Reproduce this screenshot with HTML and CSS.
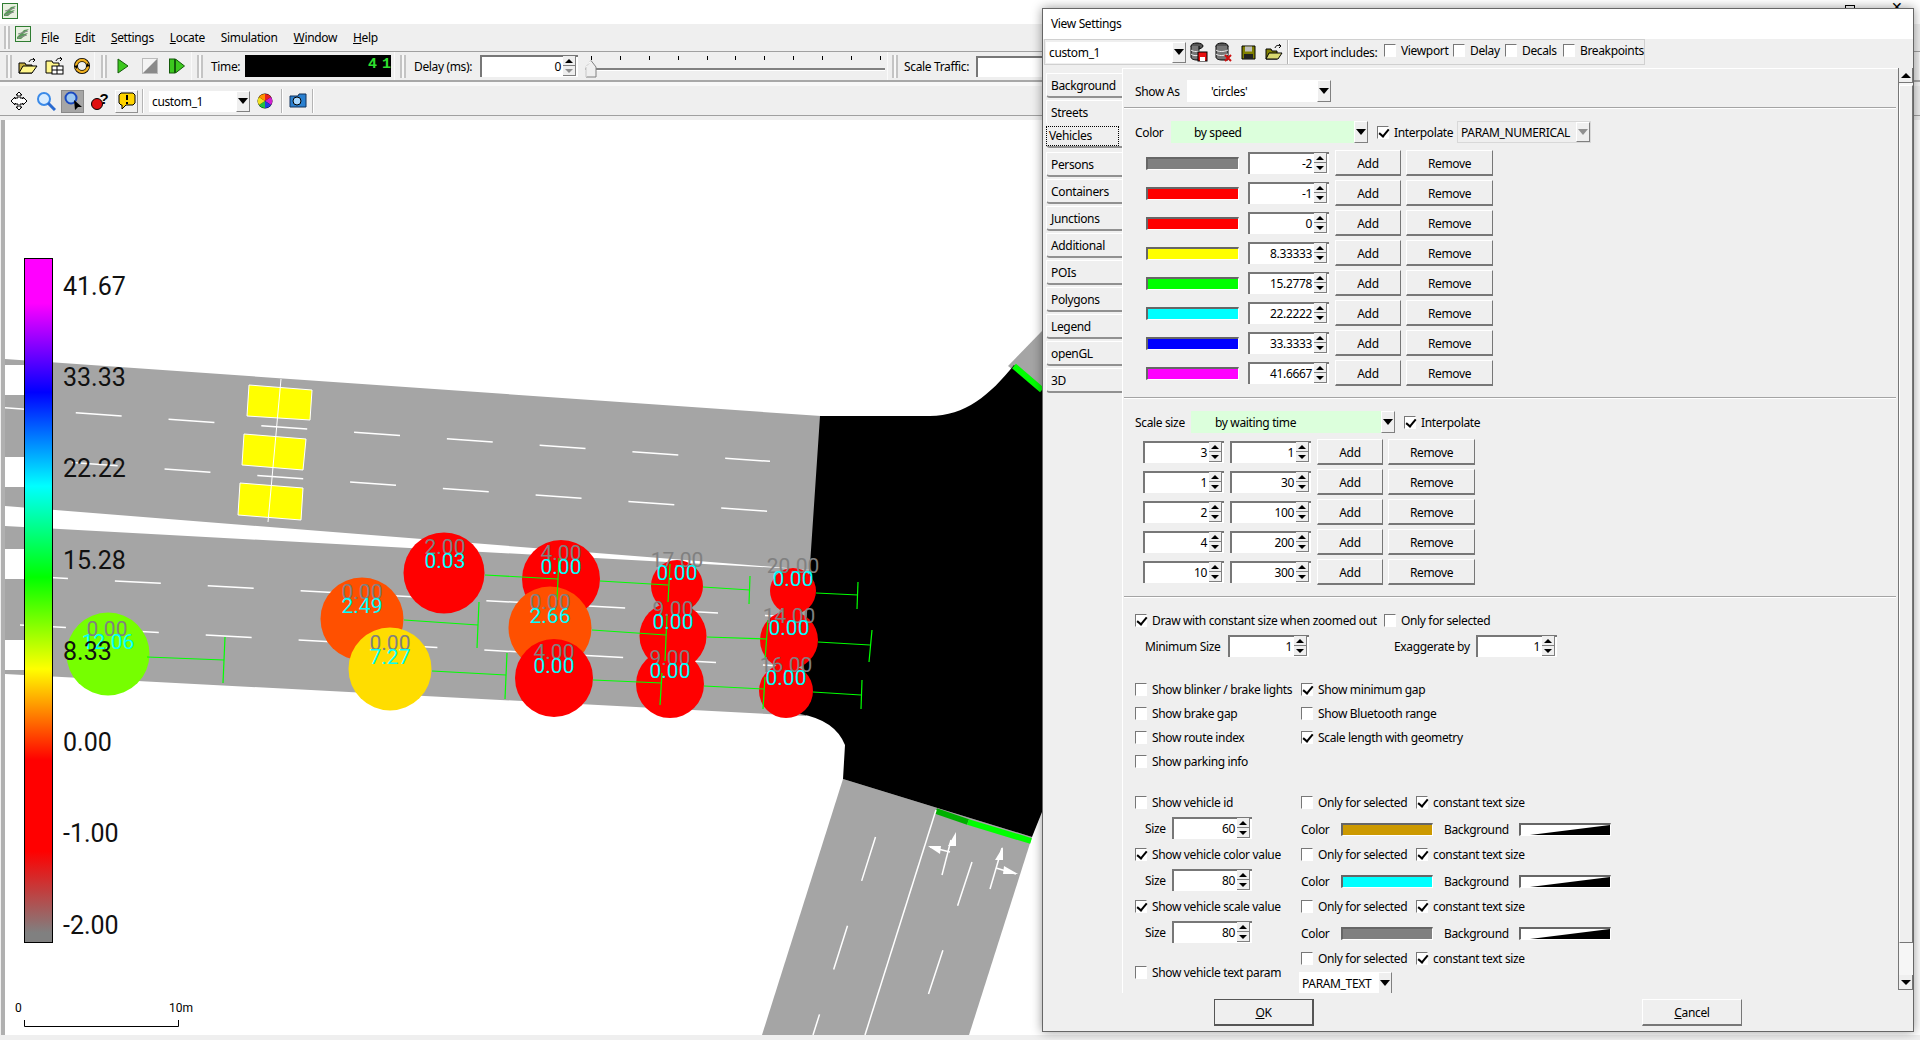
FILE: index.html
```html
<!DOCTYPE html>
<html lang="en">
<head>
  <meta charset="UTF-8" />
  <title>SUMO - View Settings</title>
  <link rel="stylesheet" href="styles.css">
</head>
<body>
  <!-- Main window -->
  <div class="titlebar">
    <svg class="app-icon" viewBox="0 0 16 16"><rect x=".5" y=".5" width="15" height="15" fill="#e8f0e0" stroke="#2f7d32"/><path d="M2 11 L9 4 L14 3 L8 8 L13 7 L6 13 L2 13Z" fill="#5a9a5a"/><path d="M3 8 L13 5 M3 12 L12 9" stroke="#8a8a8a"/></svg>
    <div class="win-btns"><span class="win-restore"></span><span class="win-close">&#10005;</span></div>
  </div>

  <div class="menubar">
    <span class="grip"></span>
    <svg class="app-icon menu-icon" viewBox="0 0 16 16"><rect x=".5" y=".5" width="15" height="15" fill="#e8f0e0" stroke="#2f7d32"/><path d="M2 11 L9 4 L14 3 L8 8 L13 7 L6 13 L2 13Z" fill="#5a9a5a"/><path d="M3 8 L13 5 M3 12 L12 9" stroke="#8a8a8a"/></svg>
    <nav class="menus">
      <span><u>F</u>ile</span><span><u>E</u>dit</span><span><u>S</u>ettings</span><span><u>L</u>ocate</span><span>Simulation</span><span><u>W</u>indow</span><span><u>H</u>elp</span>
    </nav>
  </div>

  <div class="toolbar">
    <div class="tb-section s-file">
      <span class="grip"></span>
      <span class="tb-icon"><svg width="20" height="18" viewBox="0 0 20 18"><path d="M1 6h6l1 2h6v8H1z" fill="#c8b040" stroke="#000"/><path d="M1 16l4-7h14l-5 7z" fill="#fff68c" stroke="#000"/><path d="M11 5c1-3 4-3 6-2m0 0l-2-2m2 2l-2 2" fill="none" stroke="#000"/></svg></span>
      <span class="tb-icon"><svg width="20" height="18" viewBox="0 0 20 18"><path d="M1 4h6l1 2h6v10H1z" fill="#fff68c" stroke="#000"/><rect x="7" y="9" width="11" height="8" fill="#fff" stroke="#000"/><path d="M7 13h11M12 9v8" stroke="#000"/><path d="M11 4c1-3 4-3 6-2m0 0l-2-2m2 2l-2 2" fill="none" stroke="#000"/></svg></span>
      <span class="tb-icon"><svg width="18" height="18" viewBox="0 0 18 18"><circle cx="9" cy="9" r="6" fill="none" stroke="#000" stroke-width="4"/><circle cx="9" cy="9" r="6" fill="none" stroke="#f0b020" stroke-width="2.4"/><path d="M1 9l4-1-1 4zM17 9l-4 1 1-4z"/></svg></span>
    </div>
    <div class="tb-section s-run">
      <span class="grip"></span>
      <span class="tb-icon"><svg width="12" height="16" viewBox="0 0 12 16"><path d="M1 1l10 7-10 7z" fill="#3cc81e" stroke="#145a0a"/></svg></span>
      <span class="tb-icon"><svg width="16" height="16" viewBox="0 0 16 16"><rect x=".5" y=".5" width="15" height="15" fill="#f4f4f4" stroke="#bbb"/><path d="M15 1v14H1z" fill="#8a8a8a"/></svg></span>
      <span class="tb-icon"><svg width="16" height="16" viewBox="0 0 16 16"><rect x=".5" y="1" width="5" height="14" fill="#3cc81e" stroke="#145a0a"/><path d="M6.500 1l9 7-9 7z" fill="#3cc81e" stroke="#145a0a"/></svg></span>
    </div>
    <div class="tb-section s-time">
      <span class="grip"></span>
      <span class="tb-label">Time:</span>
      <div class="lcd">4 1</div>
    </div>
    <div class="tb-section s-delay">
      <span class="grip"></span>
      <span class="tb-label">Delay (ms):</span>
      <div class="spin delay-spin"><span class="spin-val">0</span><span class="spin-btns"><i class="up"></i><i class="down off"></i></span></div>
      <div class="slider">
        <div class="ticks"><i></i><i></i><i></i><i></i><i></i><i></i><i></i><i></i><i></i><i></i><i></i></div>
        <span class="slider-track"></span>
        <svg class="slider-thumb" width="12" height="18" viewBox="0 0 12 18"><path d="M1 7L6 .5 11 7v10H1z" fill="#efefef" stroke="#808080"/><path d="M1 17V7L6 .5" fill="none" stroke="#fff"/></svg>
      </div>
    </div>
    <div class="tb-section s-scale">
      <span class="grip"></span>
      <span class="tb-label">Scale Traffic:</span>
      <div class="scale-input"></div>
    </div>
  </div>

  <div class="toolbar-gap"></div>

  <div class="toolbar view-toolbar">
    <span class="tb-icon"><svg width="20" height="20" viewBox="0 0 20 20"><path d="M10 1l3 3h-2v3h2l1 1v-2l4 4-4 4v-2l-1 1h-2v3h2l-3 3-3-3h2v-3H7l-1-1v2l-4-4 4-4v2l1-1h2V4H7z" fill="#fff" stroke="#000"/></svg></span>
    <span class="tb-icon"><svg width="20" height="20" viewBox="0 0 20 20"><circle cx="8" cy="8" r="6" fill="#d8ecff" stroke="#3a8ae8" stroke-width="2"/><path d="M12 12l7 7" stroke="#2a6ad0" stroke-width="3"/></svg></span>
    <span class="tb-icon pressed"><svg width="20" height="20" viewBox="0 0 20 20"><circle cx="8" cy="7" r="5.500" fill="#9ec8f0" stroke="#1a4ac0" stroke-width="2"/><path d="M11 9l1 10 3-3 4 0z"/></svg></span>
    <span class="tb-icon"><svg width="20" height="20" viewBox="0 0 20 20"><circle cx="7" cy="13" r="5.500" fill="#e01010" stroke="#000"/><text class="help-mark" x="14" y="13">?</text></svg></span>
    <span class="tb-icon raised"><svg width="18" height="18" viewBox="0 0 18 18"><path d="M3 1h12l2 2v8l-2 2H8l-4 4v-4H3l-2-2V3z" fill="#ffd400" stroke="#000"/><path d="M9 3v5M9 10v2" stroke="#000" stroke-width="2"/></svg></span>
    <span class="tb-sep"></span>
    <div class="combo view-combo"><span class="combo-text">custom_1</span><i class="combo-btn"></i></div>
    <span class="tb-icon wheel-slot"><svg width="16" height="16" viewBox="0 0 16 16"><circle cx="8" cy="8" r="7.500" fill="#000"/><path d="M8 8V1a7 7 0 0 1 6 3z" fill="#e82020"/><path d="M8 8l6-4a7 7 0 0 1 0 8z" fill="#d020d0"/><path d="M8 8l6 4a7 7 0 0 1-6 3z" fill="#2040e0"/><path d="M8 8v7a7 7 0 0 1-6-3z" fill="#20c040"/><path d="M8 8l-6 4a7 7 0 0 1 0-8z" fill="#f0e020"/><path d="M8 8L2 4a7 7 0 0 1 6-3z" fill="#ff9000"/></svg></span>
    <span class="tb-sep"></span>
    <span class="tb-icon cam-slot"><svg width="18" height="16" viewBox="0 0 18 16"><path d="M1 3h8l1-2h7v13H1z" fill="#2a80d0" stroke="#10305a"/><circle cx="8" cy="8" r="4" fill="#a8d8ff" stroke="#000"/></svg></span>
    <span class="tb-sep"></span>
  </div>
  <div class="toolbar-foot"></div>

  <!-- Simulation canvas -->
  <div class="canvas">
    <svg class="map" viewBox="5 120 1915 915" width="1915" height="915">
      <defs>
        <linearGradient id="ramp" gradientUnits="userSpaceOnUse" x1="0" y1="258" x2="0" y2="943">
          <stop offset=".066" stop-color="#ff00ff"/><stop offset=".196" stop-color="#0000ff"/><stop offset=".333" stop-color="#00ffff"/><stop offset=".466" stop-color="#00ff00"/><stop offset=".6" stop-color="#ffff00"/><stop offset=".733" stop-color="#ff0000"/><stop offset=".866" stop-color="#ff0000"/><stop offset=".985" stop-color="#808080"/>
        </linearGradient>
      </defs>

      <!-- roads -->
      <polygon class="road" points="5,359 821,416 812,570 5,506"/>
      <polygon class="road" points="5,526 815,570 806,716 5,674"/>
      <polygon class="road" points="1008,366 1042,331 1042,392"/>
      <polygon class="road" points="843,779 1032,837 969,1035 762,1035"/>
      <rect class="blank" x="5" y="365" width="19" height="30"/>
      <rect class="blank" x="5" y="457" width="19" height="30"/>
      <rect class="blank" x="5" y="549" width="19" height="30"/>
      <rect class="blank" x="5" y="640" width="19" height="30"/>

      <!-- junction -->
      <path class="junction" d="M820 416 L930 416 C965 416 990 395 1014 365 L1042 390 L1042 812 L1032 837 L843 779 L845 745 Q835 720 800 714 Z"/>
      <line class="stop-bright" x1="1014" y1="366" x2="1042" y2="390"/>
      <line class="stop-dark" x1="936" y1="811" x2="968" y2="822"/>
      <line class="stop-bright" x1="968" y1="822" x2="1031" y2="841"/>

      <!-- lane markings -->
      <g class="dashes">
        <line x1="-17" y1="406.200" x2="770" y2="461.300"/>
        <line x1="-21" y1="456" x2="770" y2="511.400"/>
        <line x1="22" y1="576" x2="800" y2="617.300"/>
        <line x1="20" y1="625" x2="800" y2="667"/>
        <line x1="875.500" y1="837" x2="813" y2="1035"/>
        <line x1="972" y1="862" x2="915" y2="1035"/>
      </g>
      <line class="lane-line" x1="936" y1="810" x2="865" y2="1035"/>
      <g class="arrows">
        <line x1="942" y1="875" x2="951" y2="840"/>
        <line x1="950" y1="852" x2="930" y2="847"/>
        <polygon points="956,832 948,846 956,846"/>
        <polygon points="928,846 941,846 940,854"/>
        <line x1="990" y1="889" x2="1002" y2="848"/>
        <line x1="996" y1="868" x2="1016" y2="874"/>
        <polygon points="1003,847 995,860 1003,860"/>
        <polygon points="1018,874 1004,866 1003,874"/>
      </g>

      <!-- parked rail cars -->
      <polygon class="car" points="249,385 312,390 310,420 247,416"/>
      <polygon class="car" points="244,434 306,439 303,470 242,465"/>
      <polygon class="car" points="240,483 303,488 301,520 238,515"/>
      <line class="rail-line" x1="281" y1="379" x2="268" y2="522"/>

      <!-- vehicles -->
      <circle class="v-green" cx="108" cy="654" r="41.500"/>
      <circle class="v-orange" cx="362" cy="619" r="41.500"/>
      <circle class="v-red" cx="444" cy="573" r="40.500"/>
      <circle class="v-yellow" cx="390" cy="669" r="41.500"/>
      <circle class="v-red" cx="561" cy="579" r="39"/>
      <circle class="v-orange" cx="550" cy="628" r="41.500"/>
      <circle class="v-red" cx="554" cy="678" r="39"/>
      <circle class="v-red" cx="677" cy="586" r="26"/>
      <circle class="v-red" cx="673" cy="636" r="33.500"/>
      <circle class="v-red" cx="670" cy="684" r="34"/>
      <circle class="v-red" cx="793" cy="591" r="23"/>
      <circle class="v-red" cx="789" cy="640" r="29"/>
      <circle class="v-red" cx="786" cy="691" r="27"/>

      <!-- minimum gap markers -->
      <g class="gaps">
        <polyline points="147,657 224,660"/><line x1="225" y1="637" x2="223" y2="683"/>
        <polyline points="404,620 478,625"/><line x1="479" y1="602" x2="477" y2="648"/>
        <polyline points="432,671 506,675"/><line x1="507" y1="653" x2="505" y2="699"/>
        <polyline points="485,575 558,579"/><line x1="559" y1="558" x2="557" y2="600"/>
        <polyline points="600,581 668,585"/><line x1="670" y1="564" x2="668" y2="602"/>
        <polyline points="592,630 666,635"/><line x1="667" y1="615" x2="665" y2="661"/>
        <polyline points="593,680 662,683"/><line x1="662" y1="673" x2="660" y2="705"/>
        <polyline points="703,587 750,590"/><line x1="750" y1="576" x2="749" y2="604"/>
        <polyline points="707,637 767,639"/><line x1="768" y1="620" x2="765" y2="660"/>
        <polyline points="704,686 764,689"/><line x1="765" y1="677" x2="763" y2="709"/>
        <polyline points="816,593 858,595"/><line x1="858" y1="582" x2="857" y2="609"/>
        <polyline points="818,642 870,645"/><line x1="872" y1="630" x2="869" y2="662"/>
        <polyline points="813,692 861,695"/><line x1="862" y1="680" x2="861" y2="709"/>
      </g>

      <!-- vehicle values -->
      <g class="val-scale">
        <text x="107" y="629">0.00</text><text x="362" y="592">0.00</text><text x="445" y="547">2.00</text>
        <text x="390" y="643">0.00</text><text x="561" y="553">4.00</text><text x="550" y="602">0.00</text>
        <text x="554" y="652">4.00</text><text x="677" y="560">17.00</text><text x="673" y="609">9.00</text>
        <text x="670" y="658">9.00</text><text x="793" y="566">20.00</text><text x="789" y="616">14.00</text>
        <text x="786" y="665">16.00</text>
      </g>
      <g class="val-color">
        <text x="108" y="642">12.06</text><text x="362" y="606">2.49</text><text x="445" y="561">0.03</text>
        <text x="390" y="657">7.27</text><text x="561" y="567">0.00</text><text x="550" y="616">2.66</text>
        <text x="554" y="666">0.00</text><text x="677" y="573">0.00</text><text x="673" y="622">0.00</text>
        <text x="670" y="671">0.00</text><text x="793" y="579">0.00</text><text x="789" y="628">0.00</text>
        <text x="786" y="678">0.00</text>
      </g>

      <!-- colour legend -->
      <rect class="legend-bar" x="24.500" y="258.500" width="28" height="684"/>
      <g class="legend-text">
        <text x="63" y="286">41.67</text><text x="63" y="377">33.33</text><text x="63" y="468">22.22</text>
        <text x="63" y="560">15.28</text><text x="63" y="651">8.33</text><text x="63" y="742">0.00</text>
        <text x="63" y="833">-1.00</text><text x="63" y="925">-2.00</text>
      </g>

      <!-- scale bar -->
      <path class="scale-bar" d="M24.500 1020v6.500h154V1020"/>
      <text class="scale-text" x="15" y="1008">0</text>
      <text class="scale-text" x="169" y="1008">10m</text>
    </svg>
  </div>

  <!-- View Settings dialog -->
  <div class="dialog">
    <div class="dlg-title">View Settings</div>
    <div class="dlg-toolbar">
      <div class="combo scheme-combo"><span class="combo-text">custom_1</span><i class="combo-btn"></i></div>
      <span class="dlg-icon"><svg width="18" height="20" viewBox="0 0 18 20"><ellipse cx="7" cy="4" rx="6" ry="3" fill="#555" stroke="#000"/><path d="M1 4v11c0 2 3 3 6 3h2V4" fill="#777" stroke="#000"/><path d="M1 8c2 2 8 2 12 0M1 12c2 2 6 2 8 1" fill="none" stroke="#eee"/><rect x="8" y="10" width="9" height="9" fill="#e81010" stroke="#000"/><rect x="10" y="15" width="5" height="4" fill="#fff"/></svg></span>
      <span class="dlg-icon"><svg width="18" height="20" viewBox="0 0 18 20"><ellipse cx="7" cy="4" rx="6" ry="3" fill="#555" stroke="#000"/><path d="M1 4v11c0 2 3 3 6 3h6V4" fill="#777" stroke="#000"/><path d="M1 8c2 2 8 2 12 0M1 12c2 2 8 2 12 0" fill="none" stroke="#eee"/><path d="M10 13l6 6m0-6l-6 6" stroke="#d01010" stroke-width="2"/></svg></span>
      <span class="dlg-icon"><svg width="15" height="15" viewBox="0 0 15 15"><path d="M1 1h13v13H1z" fill="#808000" stroke="#000"/><rect x="4" y="1.500" width="7" height="5" fill="#c0c0c0"/><rect x="3" y="9" width="9" height="5" fill="#222"/></svg></span>
      <span class="dlg-icon"><svg width="18" height="16" viewBox="0 0 18 16"><path d="M1 5h5l1 2h5v8H1z" fill="#808000" stroke="#000"/><path d="M1 15l3-6h13l-4 6z" fill="#d8d870" stroke="#000"/><path d="M10 4c1-3 3-3 6-2m0 0l-2-2m2 2l-2 2" fill="none" stroke="#000"/></svg></span>
      <span class="dlg-sep"></span>
      <span class="export-label">Export includes:</span>
      <label class="chk export-chk export-viewport"><span class="cb"></span>Viewport</label>
      <label class="chk export-chk export-delay"><span class="cb"></span>Delay</label>
      <label class="chk export-chk export-decals"><span class="cb"></span>Decals</label>
      <label class="chk export-chk"><span class="cb"></span>Breakpoints</label>
    </div>

    <div class="dlg-body">
      <div class="tabs">
        <div class="tab">Background</div>
        <div class="tab tab-before-active">Streets</div>
        <div class="tab tab-active"><span>Vehicles</span></div>
        <div class="tab">Persons</div>
        <div class="tab">Containers</div>
        <div class="tab">Junctions</div>
        <div class="tab">Additional</div>
        <div class="tab">POIs</div>
        <div class="tab">Polygons</div>
        <div class="tab">Legend</div>
        <div class="tab">openGL</div>
        <div class="tab">3D</div>
      </div>

      <div class="panel">
        <div class="row show-row">
          <span class="show-label">Show As</span>
          <div class="combo show-combo"><span class="combo-text">'circles'</span><i class="combo-btn"></i></div>
        </div>
        <hr class="sep sep-show">

        <div class="row color-head">
          <span class="color-label">Color</span>
          <div class="combo green color-combo"><span class="combo-text">by speed</span><i class="combo-btn"></i></div>
          <label class="chk interp"><span class="cb on"></span>Interpolate</label>
          <div class="combo disabled param-combo"><span class="combo-text">PARAM_NUMERICAL</span><i class="combo-btn"></i></div>
        </div>
        <div class="ramp-rows">
          <div class="row ramp-row"><span class="swatch c-gray"></span><div class="spin"><span class="spin-val">-2</span><span class="spin-btns"><i class="up"></i><i class="down"></i></span></div><span class="btn add">Add</span><span class="btn remove">Remove</span></div>
          <div class="row ramp-row"><span class="swatch c-red"></span><div class="spin"><span class="spin-val">-1</span><span class="spin-btns"><i class="up"></i><i class="down"></i></span></div><span class="btn add">Add</span><span class="btn remove">Remove</span></div>
          <div class="row ramp-row"><span class="swatch c-red"></span><div class="spin"><span class="spin-val">0</span><span class="spin-btns"><i class="up"></i><i class="down"></i></span></div><span class="btn add">Add</span><span class="btn remove">Remove</span></div>
          <div class="row ramp-row"><span class="swatch c-yellow"></span><div class="spin"><span class="spin-val">8.33333</span><span class="spin-btns"><i class="up"></i><i class="down"></i></span></div><span class="btn add">Add</span><span class="btn remove">Remove</span></div>
          <div class="row ramp-row"><span class="swatch c-green"></span><div class="spin"><span class="spin-val">15.2778</span><span class="spin-btns"><i class="up"></i><i class="down"></i></span></div><span class="btn add">Add</span><span class="btn remove">Remove</span></div>
          <div class="row ramp-row"><span class="swatch c-cyan"></span><div class="spin"><span class="spin-val">22.2222</span><span class="spin-btns"><i class="up"></i><i class="down"></i></span></div><span class="btn add">Add</span><span class="btn remove">Remove</span></div>
          <div class="row ramp-row"><span class="swatch c-blue"></span><div class="spin"><span class="spin-val">33.3333</span><span class="spin-btns"><i class="up"></i><i class="down"></i></span></div><span class="btn add">Add</span><span class="btn remove">Remove</span></div>
          <div class="row ramp-row"><span class="swatch c-magenta"></span><div class="spin"><span class="spin-val">41.6667</span><span class="spin-btns"><i class="up"></i><i class="down"></i></span></div><span class="btn add">Add</span><span class="btn remove">Remove</span></div>
        </div>
        <hr class="sep sep-ramp">

        <div class="row scale-head">
          <span class="scale-label">Scale size</span>
          <div class="combo green scale-combo"><span class="combo-text">by waiting time</span><i class="combo-btn"></i></div>
          <label class="chk interp"><span class="cb on"></span>Interpolate</label>
        </div>
        <div class="size-rows">
          <div class="row size-row"><div class="spin"><span class="spin-val">3</span><span class="spin-btns"><i class="up"></i><i class="down"></i></span></div><div class="spin"><span class="spin-val">1</span><span class="spin-btns"><i class="up"></i><i class="down"></i></span></div><span class="btn add">Add</span><span class="btn remove">Remove</span></div>
          <div class="row size-row"><div class="spin"><span class="spin-val">1</span><span class="spin-btns"><i class="up"></i><i class="down"></i></span></div><div class="spin"><span class="spin-val">30</span><span class="spin-btns"><i class="up"></i><i class="down"></i></span></div><span class="btn add">Add</span><span class="btn remove">Remove</span></div>
          <div class="row size-row"><div class="spin"><span class="spin-val">2</span><span class="spin-btns"><i class="up"></i><i class="down"></i></span></div><div class="spin"><span class="spin-val">100</span><span class="spin-btns"><i class="up"></i><i class="down"></i></span></div><span class="btn add">Add</span><span class="btn remove">Remove</span></div>
          <div class="row size-row"><div class="spin"><span class="spin-val">4</span><span class="spin-btns"><i class="up"></i><i class="down"></i></span></div><div class="spin"><span class="spin-val">200</span><span class="spin-btns"><i class="up"></i><i class="down"></i></span></div><span class="btn add">Add</span><span class="btn remove">Remove</span></div>
          <div class="row size-row"><div class="spin"><span class="spin-val">10</span><span class="spin-btns"><i class="up"></i><i class="down"></i></span></div><div class="spin"><span class="spin-val">300</span><span class="spin-btns"><i class="up"></i><i class="down"></i></span></div><span class="btn add">Add</span><span class="btn remove">Remove</span></div>
        </div>
        <hr class="sep sep-size">

        <div class="row const-row">
          <label class="chk const-chk"><span class="cb on"></span>Draw with constant size when zoomed out</label>
          <label class="chk"><span class="cb"></span>Only for selected</label>
        </div>
        <div class="row min-row">
          <span class="min-label">Minimum Size</span>
          <div class="spin"><span class="spin-val">1</span><span class="spin-btns"><i class="up"></i><i class="down"></i></span></div>
          <span class="exag-label">Exaggerate by</span>
          <div class="spin"><span class="spin-val">1</span><span class="spin-btns"><i class="up"></i><i class="down"></i></span></div>
        </div>

        <div class="checks">
          <label class="chk"><span class="cb"></span>Show blinker / brake lights</label><label class="chk"><span class="cb on"></span>Show minimum gap</label>
          <label class="chk"><span class="cb"></span>Show brake gap</label><label class="chk"><span class="cb"></span>Show Bluetooth range</label>
          <label class="chk"><span class="cb"></span>Show route index</label><label class="chk"><span class="cb on"></span>Scale length with geometry</label>
          <label class="chk"><span class="cb"></span>Show parking info</label>
        </div>

        <div class="labels">
          <div class="row label-row"><label class="chk col-a"><span class="cb"></span>Show vehicle id</label><label class="chk col-b"><span class="cb"></span>Only for selected</label><label class="chk"><span class="cb on"></span>constant text size</label></div>
          <div class="row label-row"><div class="size-cell"><span class="size-label">Size</span><div class="spin"><span class="spin-val">60</span><span class="spin-btns"><i class="up"></i><i class="down"></i></span></div></div><span class="text-color">Color</span><span class="swatch wide c-gold"></span><span class="text-bg">Background</span><span class="swatch wide wedge"></span></div>

          <div class="row label-row"><label class="chk col-a"><span class="cb on"></span>Show vehicle color value</label><label class="chk col-b"><span class="cb"></span>Only for selected</label><label class="chk"><span class="cb on"></span>constant text size</label></div>
          <div class="row label-row"><div class="size-cell"><span class="size-label">Size</span><div class="spin"><span class="spin-val">80</span><span class="spin-btns"><i class="up"></i><i class="down"></i></span></div></div><span class="text-color">Color</span><span class="swatch wide c-cyan"></span><span class="text-bg">Background</span><span class="swatch wide wedge"></span></div>

          <div class="row label-row"><label class="chk col-a"><span class="cb on"></span>Show vehicle scale value</label><label class="chk col-b"><span class="cb"></span>Only for selected</label><label class="chk"><span class="cb on"></span>constant text size</label></div>
          <div class="row label-row"><div class="size-cell"><span class="size-label">Size</span><div class="spin"><span class="spin-val">80</span><span class="spin-btns"><i class="up"></i><i class="down"></i></span></div></div><span class="text-color">Color</span><span class="swatch wide c-gray"></span><span class="text-bg">Background</span><span class="swatch wide wedge"></span></div>

          <div class="row param-block">
            <label class="chk col-a param-chk"><span class="cb"></span>Show vehicle text param</label>
            <div class="param-right">
              <div class="row label-row"><label class="chk col-b"><span class="cb"></span>Only for selected</label><label class="chk"><span class="cb on"></span>constant text size</label></div>
              <div class="combo text-param"><span class="combo-text">PARAM_TEXT</span><i class="combo-btn"></i></div>
            </div>
          </div>
        </div>
      </div>

      <div class="scrollbar">
        <span class="sb-btn"><i class="arrow-up"></i></span>
        <span class="sb-thumb"></span>
        <span class="sb-btn"><i class="arrow-down"></i></span>
      </div>
    </div>

    <div class="dlg-footer">
      <span class="btn ok"><u>O</u>K</span>
      <span class="btn cancel"><u>C</u>ancel</span>
    </div>
  </div>
</body>
</html>
```

FILE: styles.css
```css
* {
  box-sizing: border-box;
}
body {
  margin: 0;
  width: 1920px;
  height: 1040px;
  overflow: hidden;
  position: relative;
  background: #efefef;
  font-family: 'Noto Sans', sans-serif;
  font-size: 12px;
  letter-spacing: -0.35px;
  color: #000;
}
u {
  text-underline-offset: 1px;
}

/* Main window */
.titlebar {
  height: 24px;
  background: #fff;
  padding: 3px 0 0 2px;
  position: relative;
}
.app-icon {
  width: 16px;
  height: 16px;
  display: block;
}
.win-btns {
  position: absolute;
  top: 0;
  right: 0;
}
.win-restore {
  position: absolute;
  top: 5px;
  right: 65px;
  width: 10px;
  height: 6px;
  border: 1px solid #000;
}
.win-close {
  position: absolute;
  top: -3px;
  right: 17px;
  font-size: 14px;
}
.menubar {
  height: 28px;
  display: flex;
  align-items: flex-start;
  border-bottom: 1px solid #a0a0a0;
  padding: 2px 0 0 4px;
}
.grip {
  display: block;
  flex: none;
  width: 6px;
  height: 23px;
  border-left: 2px solid #c4c4c4;
  border-right: 2px solid #c4c4c4;
  background: #f8f8f8;
}
.menu-icon {
  margin-left: 5px;
}
.menus {
  display: flex;
  gap: 16px;
  margin-left: 10px;
  line-height: 24px;
}

.toolbar {
  display: flex;
  height: 30px;
  border-bottom: 2px solid #a8a8a8;
}
.tb-section {
  display: flex;
  align-items: center;
  flex: none;
  height: 28px;
  padding-left: 5px;
  border-right: 1px solid #fafafa;
}
.tb-section .grip {
  margin-right: 2px;
}
.s-file { width: 95px; padding-left: 6px; }
.s-run { width: 97px; padding-left: 6px; }
.s-time { width: 203px; }
.s-delay { width: 493px; }
.s-scale { flex: 1; padding-left: 4px; }
.tb-icon {
  flex: none;
  width: 27px;
  height: 24px;
  display: flex;
  align-items: center;
  justify-content: center;
}
.tb-label {
  flex: none;
  margin-left: 6px;
}
.lcd {
  width: 146px;
  height: 22px;
  margin-left: auto;
  margin-right: 3px;
  background: #000;
  color: #2fe02f;
  text-align: right;
  padding-right: 2px;
  font-family: 'Liberation Mono', monospace;
  font-size: 15px;
  letter-spacing: -2px;
  font-weight: 700;
  line-height: 19px;
}
.s-delay .delay-spin {
  width: 98px;
  margin-left: auto;
}
.slider {
  position: relative;
  width: 305px;
  height: 26px;
  margin-left: 4px;
}
.ticks {
  position: absolute;
  top: 3px;
  left: 9px;
  right: 6px;
  display: flex;
  justify-content: space-between;
}
.ticks i {
  width: 1px;
  height: 4px;
  background: #000;
}
.slider-track {
  position: absolute;
  left: 3px;
  right: 2px;
  top: 15px;
  height: 3px;
  background: #808080;
  border-bottom: 1px solid #fff;
}
.slider-thumb {
  position: absolute;
  left: 3px;
  top: 7px;
}
.s-scale .tb-label {
  margin-left: 4px;
}
.scale-input {
  width: 100px;
  height: 21px;
  margin-left: 7px;
  background: #fff;
  border-left: 2px solid #777;
  border-top: 2px solid #777;
}
.toolbar-gap {
  height: 4px;
  background: #f8f8f8;
}
.view-toolbar {
  height: 29px;
  align-items: center;
  padding: 1px 0 0 5px;
  border-bottom: none;
}
.tb-icon.pressed {
  width: 23px;
  margin: 0 2px;
  height: 23px;
  background: #a6a6a6;
  border: 1px solid #8a8a8a;
}
.tb-icon.raised {
  width: 23px;
  margin: 0 2px;
  height: 23px;
  border-right: 1px solid #909090;
  border-bottom: 1px solid #909090;
  border-top: 1px solid #fff;
  border-left: 1px solid #fff;
}
.help-mark {
  font-family: 'Liberation Sans', sans-serif;
  font-size: 15px;
  font-weight: 700;
  text-anchor: middle;
}
.tb-sep {
  flex: none;
  width: 2px;
  height: 24px;
  margin: 0 5px 0 2px;
  background: #b4b4b4;
  border-right: 1px solid #fff;
}
.wheel-slot {
  width: 20px;
  margin-left: 5px;
  margin-right: 4px;
}
.cam-slot {
  width: 20px;
  margin-right: 2px;
}
.toolbar-foot {
  height: 5px;
  border-top: 1px solid #a0a0a0;
}

/* Simulation canvas */
.canvas {
  height: 915px;
  margin-left: 1px;
  border-left: 4px solid #b0b0b0;
  background: #fff;
  overflow: hidden;
}
.map {
  display: block;
  letter-spacing: 0;
}
.road { fill: #a5a5a5; }
.blank { fill: #fff; }
.junction { fill: #000; }
.stop-bright { stroke: #00ff00; stroke-width: 6; }
.stop-dark { stroke: #00b000; stroke-width: 6; }
.dashes line {
  stroke: #fff;
  stroke-width: 1.5;
  stroke-dasharray: 46 47;
}
.lane-line {
  stroke: #fff;
  stroke-width: 1.5;
}
.rail-line {
  stroke: #fff;
  stroke-width: 1;
}
.arrows line {
  stroke: #fff;
  stroke-width: 1.5;
}
.arrows polygon { fill: #fff; }
.car {
  fill: #ffff00;
  stroke: #fff;
  stroke-width: 1;
}
.v-red { fill: #ff0000; }
.v-orange { fill: #ff5000; }
.v-yellow { fill: #ffdd00; }
.v-green { fill: #76ff00; }
.gaps line,
.gaps polyline {
  stroke: #00ff00;
  stroke-width: 1.2;
  fill: none;
}
.val-scale text,
.val-color text {
  font-family: Roboto, sans-serif;
  font-size: 21px;
  text-anchor: middle;
  dominant-baseline: central;
}
.val-scale text { fill: #808080; }
.val-color text { fill: #00ffff; }
.legend-bar {
  fill: url(#ramp);
  stroke: #000;
}
.legend-text text {
  font-family: Roboto, sans-serif;
  font-size: 25px;
  dominant-baseline: central;
  fill: #111;
}
.scale-bar {
  fill: none;
  stroke: #000;
}
.scale-text {
  font-family: Roboto, sans-serif;
  font-size: 12px;
  dominant-baseline: central;
  fill: #000;
}

/* Dialog */
.dialog {
  position: absolute;
  left: 1042px;
  top: 8px;
  width: 872px;
  height: 1024px;
  background: #efefef;
  border: 1px solid #666;
  box-shadow: 0 0 10px rgba(0,0,0,0.4);
}
.dlg-title {
  height: 30px;
  background: #fff;
  padding-left: 8px;
  line-height: 30px;
}
.dlg-toolbar {
  display: flex;
  align-items: center;
  width: 601px;
  height: 26px;
  margin-left: 1px;
  border: 1px solid #d0d0d0;
  padding-left: 1px;
}
.scheme-combo {
  width: 140px;
  height: 21px;
}
.dlg-icon {
  flex: none;
  width: 25px;
  display: flex;
  justify-content: center;
}
.dlg-sep {
  flex: none;
  width: 2px;
  height: 24px;
  margin: 0 4px 0 1px;
  background: #b4b4b4;
  border-right: 1px solid #fff;
}
.export-label {
  flex: none;
  width: 91px;
}
.export-chk {
  flex: none;
  margin-top: -3px;
}
.export-viewport { width: 69px; }
.export-delay { width: 52px; }
.export-decals { width: 58px; }

.dlg-body {
  display: flex;
  height: 925px;
  margin-top: 3px;
}
.tabs {
  flex: none;
  width: 79px;
  padding: 5px 0 0 3px;
}
.tab {
  height: 25px;
  margin-bottom: 2px;
  padding-left: 4px;
  line-height: 23px;
  border-top: 1px solid #fff;
  border-left: 1px solid #fff;
  border-bottom: 2px solid #909090;
  border-bottom-left-radius: 4px;
}
.tab-before-active {
  margin-bottom: 0;
  border-bottom: none;
}
.tab-active {
  height: 23px;
  margin-bottom: 4px;
  padding: 1px 0 0 0;
  border-top: none;
  border-left: none;
}
.tab-active span {
  display: block;
  height: 20px;
  line-height: 18px;
  padding-left: 2px;
  margin-right: 3px;
  border: 1px dotted #000;
}
.panel {
  flex: none;
  width: 776px;
  height: 925px;
  padding-left: 12px;
  border-left: 1px solid #fff;
  border-top: 1px solid #fff;
  overflow: hidden;
}
.row {
  display: flex;
  align-items: center;
}
.sep {
  height: 2px;
  margin: 0 2px 0 -11px;
  border: none;
  border-top: 1px solid #a4a4a4;
  border-bottom: 1px solid #fff;
}
.show-row {
  height: 22px;
  margin-top: 11px;
}
.show-label {
  width: 52px;
}
.show-combo {
  width: 144px;
  height: 22px;
}
.sep-show { margin-top: 5px; }
.color-head {
  height: 22px;
  margin-top: 12px;
}
.color-label {
  width: 36px;
}
.color-combo {
  width: 197px;
  height: 22px;
}
.interp {
  width: 80px;
  margin-left: 9px;
}
.param-combo {
  width: 134px;
  height: 22px;
}
.ramp-rows {
  margin-top: 7px;
  padding-left: 11px;
}
.ramp-row,
.size-row {
  height: 26px;
  margin-bottom: 4px;
}
.ramp-row .swatch {
  margin-right: 9px;
}
.sep-ramp { margin-top: 11px; }
.scale-head {
  height: 22px;
  margin-top: 12px;
}
.scale-label {
  width: 56px;
}
.scale-combo {
  width: 204px;
  height: 22px;
}
.size-rows {
  margin-top: 6px;
  padding-left: 8px;
}
.size-row .spin {
  margin-right: 6px;
}
.sep-size { margin-top: 11px; }
.const-row {
  height: 16px;
  margin-top: 14px;
}
.const-chk {
  width: 249px;
}
.min-row {
  height: 22px;
  margin-top: 7px;
  padding-left: 10px;
}
.min-label {
  width: 83px;
}
.exag-label {
  width: 167px;
  padding-left: 85px;
}
.checks {
  display: grid;
  grid-template-columns: 166px 1fr;
  grid-auto-rows: 16px;
  row-gap: 8px;
  margin-top: 24px;
}
.labels {
  margin-top: 20px;
}
.label-row {
  height: 26px;
}
.col-a { width: 166px; flex: none; }
.col-b { width: 115px; flex: none; }
.size-cell {
  display: flex;
  align-items: center;
  width: 166px;
  padding-left: 10px;
}
.size-label {
  width: 27px;
}
.size-cell .spin {
  width: 80px;
}
.text-color {
  width: 40px;
  margin-top: 3px;
}
.text-bg {
  margin: 3px 0 0 11px;
  width: 75px;
}
.swatch {
  flex: none;
  display: block;
  width: 93px;
  height: 13px;
  border-top: 2px solid #666;
  border-left: 2px solid #666;
  border-right: 1px solid #fff;
  border-bottom: 1px solid #fff;
}
.swatch.wide {
  width: 92px;
  margin-top: 3px;
}
.c-gray { background: #808080; }
.c-red { background: #ff0000; }
.c-yellow { background: #ffff00; }
.c-green { background: #00ff00; }
.c-cyan { background: #00ffff; }
.c-blue { background: #0000ff; }
.c-magenta { background: #ff00ff; }
.c-gold { background: #cc9900; }
.wedge {
  position: relative;
  background: #fff;
}
.wedge::after {
  content: "";
  position: absolute;
  left: 9px;
  right: 0;
  top: 0;
  bottom: 0;
  background: #000;
  clip-path: polygon(0 100%, 100% 0, 100% 100%);
}
.param-block {
  align-items: flex-start;
}
.param-chk {
  margin-top: 19px;
}
.text-param {
  width: 93px;
  height: 22px;
  margin: 1px 0 0 -2px;
}

/* Widgets */
.chk {
  display: inline-flex;
  align-items: center;
  white-space: nowrap;
}
.cb {
  flex: none;
  position: relative;
  width: 12px;
  height: 13px;
  margin-right: 5px;
  background: #fff;
  border-top: 1px solid #777;
  border-left: 1px solid #777;
  border-right: 1px solid #fff;
  border-bottom: 1px solid #fff;
}
.cb.on::after {
  content: "";
  position: absolute;
  left: 3px;
  top: 0;
  width: 4px;
  height: 8px;
  border-right: 2px solid #000;
  border-bottom: 2px solid #000;
  transform: rotate(40deg);
}
.combo {
  flex: none;
  display: flex;
  align-items: center;
  justify-content: space-between;
  background: #fff;
  position: relative;
}
.combo-text {
  padding-left: 3px;
  white-space: nowrap;
}
.combo-btn {
  flex: none;
  display: flex;
  align-items: center;
  justify-content: center;
  align-self: stretch;
  width: 14px;
  background: #efefef;
  border-right: 1px solid #808080;
  border-bottom: 1px solid #808080;
  border-top: 1px solid #fff;
  border-left: 1px solid #fff;
}
.combo-btn::after {
  content: "";
  border-left: 5px solid transparent;
  border-right: 5px solid transparent;
  border-top: 6px solid #000;
}
.show-combo .combo-text { padding-left: 24px; }
.color-combo .combo-text { padding-left: 23px; }
.scale-combo .combo-text { padding-left: 24px; }
.view-combo {
  width: 101px;
  height: 21px;
}
.green { background: #dcffdc; }
.disabled {
  background: #efefef;
  border: 1px solid #d8d8d8;
}
.disabled .combo-btn::after {
  border-top-color: #909090;
}
.spin {
  flex: none;
  display: flex;
  justify-content: flex-end;
  align-items: center;
  width: 81px;
  height: 22px;
  padding: 0 2px 2px 0;
  background: #fff;
  border-top: 2px solid #777;
  border-left: 2px solid #777;
}
.spin-val {
  margin-right: 2px;
}
.spin-btns {
  flex: none;
  display: flex;
  flex-direction: column;
  width: 13px;
}
.spin-btns i {
  display: flex;
  align-items: center;
  justify-content: center;
  height: 10px;
  background: #efefef;
  border-right: 1px solid #808080;
  border-bottom: 1px solid #808080;
}
.spin-btns .up::after {
  content: "";
  border-left: 4px solid transparent;
  border-right: 4px solid transparent;
  border-bottom: 4px solid #000;
}
.spin-btns .down::after {
  content: "";
  border-left: 4px solid transparent;
  border-right: 4px solid transparent;
  border-top: 4px solid #000;
}
.spin-btns .off::after {
  border-top-color: #909090;
}
.btn {
  flex: none;
  display: flex;
  align-items: center;
  justify-content: center;
  height: 26px;
  padding-top: 1px;
  background: #efefef;
  border-top: 1px solid #fff;
  border-left: 1px solid #fff;
  border-right: 1px solid #777;
  border-bottom: 2px solid #777;
}
.add {
  width: 66px;
  margin-right: 5px;
}
.ramp-row .spin {
  margin-right: 6px;
}
.remove {
  width: 87px;
}
.scrollbar {
  flex: none;
  display: flex;
  flex-direction: column;
  width: 15px;
  height: 922px;
  background: #f6f6f6;
  border-left: 1px solid #777;
}
.sb-btn {
  flex: none;
  display: flex;
  align-items: center;
  justify-content: center;
  height: 15px;
  background: #efefef;
  border-right: 1px solid #777;
  border-bottom: 1px solid #777;
}
.sb-btn:last-child {
  margin-top: auto;
}
.arrow-up {
  border-left: 5px solid transparent;
  border-right: 5px solid transparent;
  border-bottom: 5px solid #000;
}
.arrow-down {
  border-left: 5px solid transparent;
  border-right: 5px solid transparent;
  border-top: 5px solid #000;
}
.sb-thumb {
  flex: none;
  height: 858px;
  margin-top: 2px;
  background: #efefef;
  border-top: 1px solid #fff;
  border-left: 1px solid #fff;
  border-right: 1px solid #777;
  border-bottom: 1px solid #777;
}
.dlg-footer {
  display: flex;
  padding: 6px 0 0 171px;
}
.ok,
.cancel {
  width: 100px;
  height: 27px;
}
.ok {
  border: 1px solid #555;
  border-right-width: 2px;
  border-bottom-width: 2px;
}
.cancel {
  margin-left: 328px;
}
```
